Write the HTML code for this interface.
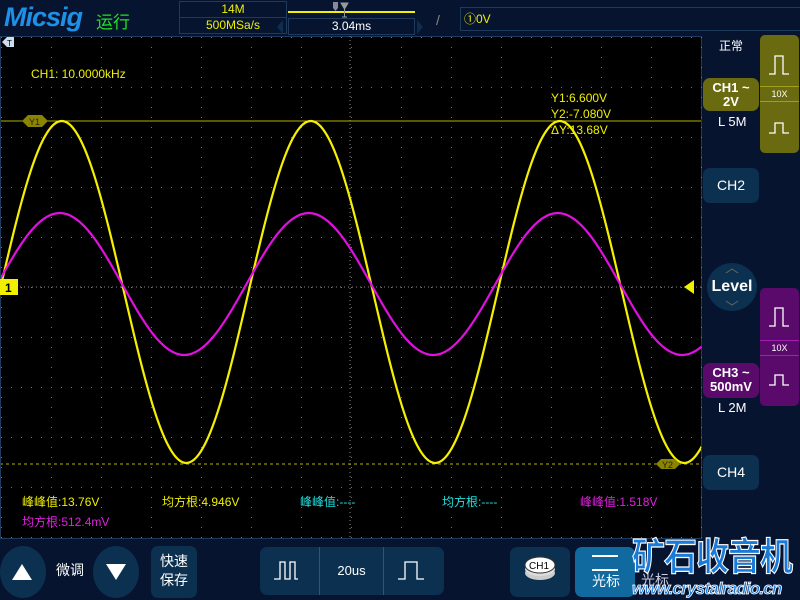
<!DOCTYPE html>
<html><head><meta charset="utf-8"><style>
*{margin:0;padding:0;box-sizing:border-box}
html,body{width:800px;height:600px;overflow:hidden}
body{background:#071430;position:relative;font-family:"Liberation Sans","Noto Sans CJK SC",sans-serif}
.a{position:absolute;white-space:nowrap}
.btn{position:absolute;background:#0c3050;border-radius:7px;color:#fff;text-align:center}
</style></head><body>
<!-- header -->
<div class="a" style="left:4px;top:2px;font:italic bold 27px 'Liberation Sans',sans-serif;color:#1e90e8;letter-spacing:-1px">Micsig</div>
<div class="a" style="left:96px;top:8px;font-size:17px;color:#22e022">运行</div>
<div class="a" style="left:179px;top:1px;width:108px;height:17px;border:1px solid #1e3a5c;color:#f0f000;font-size:12px;text-align:center;line-height:15px">14M</div>
<div class="a" style="left:179px;top:17px;width:108px;height:17px;border:1px solid #1e3a5c;color:#f0f000;font-size:12px;text-align:center;line-height:15px">500MSa/s</div>
<div class="a" style="left:288px;top:11px;width:127px;height:2px;background:#f0f000"></div>
<svg class="a" style="left:330px;top:1px" width="20" height="18"><path d="M3 1h5v6l-2.5 3-2.5-3z" fill="#889"/><path d="M11 2h7l-3.5 6z M14.5 8v8 M12 16h5" fill="#999" stroke="#999"/></svg>
<div class="a" style="left:288px;top:18px;width:127px;height:17px;border:1px solid #1e3a5c;color:#fff;font-size:12px;text-align:center;line-height:15px">3.04ms</div>
<svg class="a" style="left:275px;top:19px" width="150" height="16"><path d="M2 8l6-7v14z" fill="#0e2e50"/><path d="M142 1l6 7-6 7z" fill="#0e2e50"/></svg>
<div class="a" style="left:436px;top:12px;color:#888;font-size:14px">/</div>
<div class="a" style="left:460px;top:7px;width:345px;height:24px;border:1px solid #1e3a5c;color:#f0f000;font-size:12px;line-height:22px;padding-left:3px">①0V</div>
<!-- plot -->
<div class="a" style="left:0;top:36px;width:702px;height:503px;background:#000;border:1px solid #1e3a5c"></div>
<svg class="a" style="left:0;top:36px" width="702" height="503">
<defs>
<pattern id="gv" x="1" y="1" width="50" height="10" patternUnits="userSpaceOnUse"><rect width="1" height="1" fill="#777"/></pattern>
<pattern id="gh" x="1" y="1" width="10" height="50" patternUnits="userSpaceOnUse"><rect width="1" height="1" fill="#777"/></pattern>
<clipPath id="cp"><rect x="1" y="1" width="700" height="501"/></clipPath>
</defs>
<rect width="702" height="503" fill="url(#gv)"/>
<rect width="702" height="503" fill="url(#gh)"/>
<line x1="350" y1="0" x2="350" y2="503" stroke="#888" stroke-dasharray="1 3"/>
<line x1="0" y1="251" x2="702" y2="251" stroke="#888" stroke-dasharray="1 3"/>
<g clip-path="url(#cp)">
<line x1="0" y1="85" x2="702" y2="85" stroke="#b8b000" stroke-width="1"/>
<line x1="0" y1="428" x2="702" y2="428" stroke="#b8b000" stroke-dasharray="3 3"/>
<path transform="translate(0,-36)" d="M-0.5,292 c20.3,-87.6 39.8,-171 62.25,-171 c22.45,0 41.95,83.4 62.25,171 c20.3,87.6 39.8,171 62.25,171 c22.45,0 41.95,-83.4 62.25,-171 c20.3,-87.6 39.8,-171 62.25,-171 c22.45,0 41.95,83.4 62.25,171 c20.3,87.6 39.8,171 62.25,171 c22.45,0 41.95,-83.4 62.25,-171 c20.3,-87.6 39.8,-171 62.25,-171 c22.45,0 41.95,83.4 62.25,171 c20.3,87.6 39.8,171 62.25,171 c22.45,0 41.95,-83.4 62.25,-171" fill="none" stroke="#f5f000" stroke-width="2.2"/>
<path transform="translate(0,-36)" d="M-2.5,284 c20.3,-36.4 39.8,-71 62.25,-71 c22.45,0 41.95,34.6 62.25,71 c20.3,36.4 39.8,71 62.25,71 c22.45,0 41.95,-34.6 62.25,-71 c20.3,-36.4 39.8,-71 62.25,-71 c22.45,0 41.95,34.6 62.25,71 c20.3,36.4 39.8,71 62.25,71 c22.45,0 41.95,-34.6 62.25,-71 c20.3,-36.4 39.8,-71 62.25,-71 c22.45,0 41.95,34.6 62.25,71 c20.3,36.4 39.8,71 62.25,71 c22.45,0 41.95,-34.6 62.25,-71" fill="none" stroke="#e010e0" stroke-width="2.2"/>
</g>
<path d="M22 85l6-6h14l6 6-6 6h-14z" fill="#8a8400"/>
<text x="29" y="89" font-size="9" fill="#222" font-family="Liberation Sans">Y1</text>
<path d="M656 428l5-5h14l5 5-5 5h-14z" fill="#8a8400"/>
<text x="662" y="432" font-size="9" fill="#222" font-family="Liberation Sans">Y2</text>
<rect x="0" y="243" width="18" height="16" fill="#f0f000"/>
<text x="5" y="256" font-size="12" font-weight="bold" fill="#000" font-family="Liberation Sans">1</text>
<path d="M684 251l10-7v14z" fill="#f0f000"/>
<path d="M2 6l5-5h7v10h-7z" fill="#cde"/>
<text x="7" y="10" font-size="8" fill="#000" font-family="Liberation Sans">T</text>
<text x="31" y="42" font-size="12" fill="#f0f000" font-family="Liberation Sans">CH1: 10.0000kHz</text>
<text x="551" y="66" font-size="12" fill="#f0f000" font-family="Liberation Sans">Y1:6.600V</text>
<text x="551" y="82" font-size="12" fill="#f0f000" font-family="Liberation Sans">Y2:-7.080V</text>
<text x="551" y="98" font-size="12" fill="#f0f000" font-family="Liberation Sans">ΔY:13.68V</text>
</svg>
<div class="a" style="left:22px;top:493px;font-size:12px;color:#f0f000">峰峰值:13.76V</div>
<div class="a" style="left:162px;top:493px;font-size:12px;color:#f0f000">均方根:4.946V</div>
<div class="a" style="left:300px;top:493px;font-size:12px;color:#20e0e0">峰峰值:----</div>
<div class="a" style="left:442px;top:493px;font-size:12px;color:#20e0e0">均方根:----</div>
<div class="a" style="left:580px;top:493px;font-size:12px;color:#e020e0">峰峰值:1.518V</div>
<div class="a" style="left:22px;top:513px;font-size:12px;color:#e020e0">均方根:512.4mV</div>
<!-- right panel -->
<div class="a" style="left:719px;top:37px;font-size:12px;color:#fff">正常</div>
<div class="a" style="left:760px;top:35px;width:39px;height:118px;background:#6a6a10;border-radius:5px"></div>
<div class="a" style="left:760px;top:86px;width:39px;height:16px;border-top:1px solid #a0a020;border-bottom:1px solid #a0a020;color:#fff;font-size:9px;text-align:center;line-height:14px">10X</div>
<svg class="a" style="left:760px;top:35px" width="39" height="118"><path d="M9 39h6V21h8v18h6" fill="none" stroke="#fff" stroke-width="1.3"/><path d="M9 98h6V88h8v10h6" fill="none" stroke="#fff" stroke-width="1.3"/></svg>
<div class="btn" style="left:703px;top:78px;width:56px;height:33px;background:#6a6a10;font-weight:bold;font-size:13px;line-height:14px;padding-top:3px">CH1 ~<br>2V</div>
<div class="a" style="left:718px;top:114px;color:#fff;font-size:13px">L 5M</div>
<div class="btn" style="left:703px;top:168px;width:56px;height:35px;font-size:14px;line-height:35px">CH2</div>
<div class="a" style="left:707px;top:263px;width:50px;height:48px;border-radius:50%;background:#0c3050;color:#fff;font-weight:bold;font-size:16px;text-align:center;line-height:48px">Level</div>
<svg class="a" style="left:707px;top:263px" width="50" height="48"><path d="M19 10l6-4 6 4M19 38l6 4 6-4" fill="none" stroke="#665" stroke-width="1"/></svg>
<div class="a" style="left:760px;top:288px;width:39px;height:118px;background:#5a0a6a;border-radius:5px"></div>
<div class="a" style="left:760px;top:340px;width:39px;height:16px;border-top:1px solid #a020b0;border-bottom:1px solid #a020b0;color:#fff;font-size:9px;text-align:center;line-height:14px">10X</div>
<svg class="a" style="left:760px;top:288px" width="39" height="118"><path d="M9 38h6V20h8v18h6" fill="none" stroke="#fff" stroke-width="1.3"/><path d="M9 97h6V87h8v10h6" fill="none" stroke="#fff" stroke-width="1.3"/></svg>
<div class="btn" style="left:703px;top:363px;width:56px;height:35px;background:#5a0a6a;font-weight:bold;font-size:13px;line-height:14px;padding-top:3px">CH3 ~<br>500mV</div>
<div class="a" style="left:718px;top:400px;color:#fff;font-size:13px">L 2M</div>
<div class="btn" style="left:703px;top:455px;width:56px;height:35px;font-size:14px;line-height:35px">CH4</div>
<!-- bottom -->
<div class="a" style="left:0;top:546px;width:46px;height:52px;border-radius:50%;background:#0c3050"></div>
<svg class="a" style="left:10px;top:562px" width="24" height="20"><path d="M2 18L12 2l10 16z" fill="#fff"/></svg>
<div class="a" style="left:56px;top:560px;color:#fff;font-size:14px">微调</div>
<div class="a" style="left:93px;top:546px;width:46px;height:52px;border-radius:50%;background:#0c3050"></div>
<svg class="a" style="left:104px;top:562px" width="24" height="20"><path d="M2 2h20L12 18z" fill="#fff"/></svg>
<div class="btn" style="left:151px;top:546px;width:46px;height:52px;font-size:14px;line-height:19px;padding-top:6px">快速<br>保存</div>
<div class="btn" style="left:260px;top:547px;width:184px;height:48px"></div>
<div class="a" style="left:319px;top:547px;width:1px;height:48px;background:#1b5a8a"></div>
<div class="a" style="left:383px;top:547px;width:1px;height:48px;background:#1b5a8a"></div>
<svg class="a" style="left:260px;top:557px" width="184" height="30"><path d="M14 22h6V5h5v17h5V5h5v17h3" fill="none" stroke="#fff" stroke-width="1.3"/><path d="M138 22h7V5h12v17h7" fill="none" stroke="#fff" stroke-width="1.3"/></svg>
<div class="a" style="left:320px;top:563px;width:63px;text-align:center;color:#fff;font-size:13px">20us</div>
<div class="btn" style="left:510px;top:547px;width:60px;height:50px"></div>
<svg class="a" style="left:520px;top:555px" width="40" height="30"><ellipse cx="20" cy="18" rx="15" ry="7" fill="#ccc"/><ellipse cx="20" cy="14" rx="15" ry="7" fill="#ddd"/><ellipse cx="20" cy="10" rx="15" ry="8" fill="#fff" stroke="#333"/><text x="9" y="14" font-size="10" fill="#000" font-family="Liberation Sans">CH1</text></svg>
<div class="btn" style="left:575px;top:547px;width:60px;height:50px;background:#106aa0"></div>
<div class="a" style="left:592px;top:555px;width:26px;height:2px;background:#fff"></div>
<div class="a" style="left:592px;top:569px;width:26px;height:2px;background:#fff"></div>
<div class="a" style="left:592px;top:571px;color:#fff;font-size:14px">光标</div>
<div class="a" style="left:641px;top:570px;color:#ccd;font-size:14px">光标</div>
<div class="a" style="left:632px;top:533px;width:170px;color:#1a7ad8;font-size:33px;line-height:42px;font-weight:bold;letter-spacing:-1px;-webkit-text-stroke:1px #fff;transform:scaleY(1.15);transform-origin:top left">矿石收音机</div>
<div class="a" style="left:632px;top:579px;color:#1a7ad8;font:italic bold 17px/20px 'Liberation Sans',sans-serif;-webkit-text-stroke:0.8px #fff;letter-spacing:-0.8px">www.crystalradio.cn</div>
</body></html>
